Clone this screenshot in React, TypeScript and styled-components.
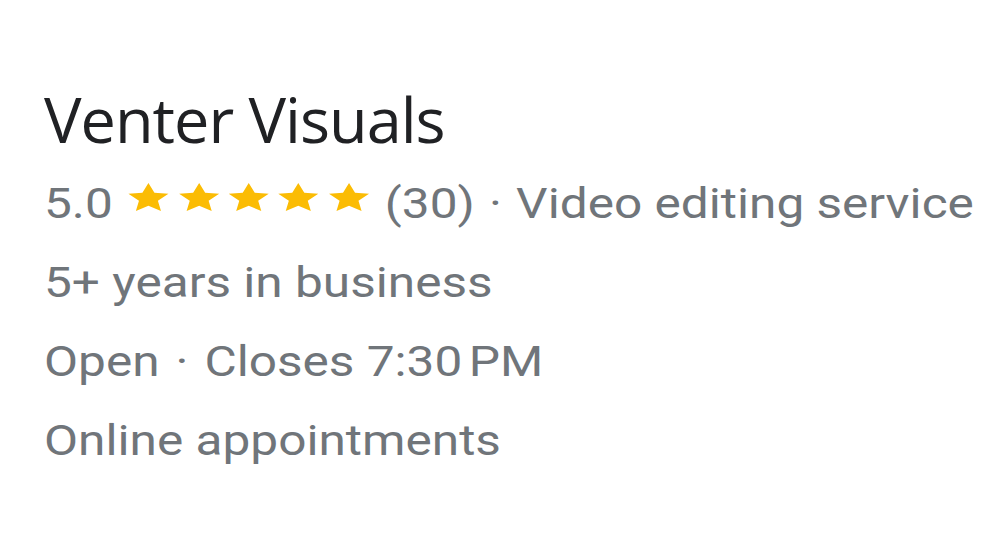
import styled, { createGlobalStyle } from 'styled-components';

const GlobalStyle = createGlobalStyle`
  html, body {
    margin: 0;
    padding: 0;
    background: #ffffff;
  }
`;

const Card = styled.div`
  width: 1000px;
  height: 557px;
  box-sizing: border-box;
  padding: 83px 0 0 44px;
  display: flex;
  flex-direction: column;
  overflow: hidden;
  font-family: Roboto, "Liberation Sans", sans-serif;
  color: #70757a;
  background: #ffffff;
`;

const Title = styled.h1`
  margin: 0 0 9px 0;
  font-family: "Open Sans", Roboto, sans-serif;
  font-weight: 400;
  font-size: 63px;
  line-height: 72px;
  color: #202124;
  letter-spacing: -1px;
`;

// the screenshot is stretched a bit wider than the real text
const Details = styled.div`
  width: 780px;
  display: flex;
  flex-direction: column;
  transform: scaleX(1.18);
  transform-origin: left top;
`;

const Line = styled.div`
  display: flex;
  align-items: center;
  font-size: 42px;
  line-height: 79px;
  white-space: pre;
`;

const Stars = styled.span`
  display: inline-flex;
  gap: 5.4px;
  margin: 0 12px 12px 12px;
`;

const Dot = styled.span<{ $wide?: boolean }>`
  margin: 0 ${p => (p.$wide ? '13.5px' : '12px')};
`;

const Time = styled.span`
  word-spacing: -5px;
`;

function Star() {
  return (
    <svg width="37" height="31" viewBox="0 0 24 23" preserveAspectRatio="none">
      <path
        d="M12 0.8l3.3 7.1 7.7.8-5.8 5.2 1.7 7.6L12 17.6l-6.9 3.9 1.7-7.6L1 8.7l7.7-.8z"
        fill="#fbbc04"
      />
    </svg>
  );
}

export default function App() {
  return (
    <>
      <GlobalStyle />
      <Card>
        <Title>Venter Visuals</Title>
        <Details>
          <Line>
            5.0
            <Stars>
              {[0, 1, 2, 3, 4].map(i => <Star key={i} />)}
            </Stars>
            (30)<Dot>·</Dot>Video editing service
          </Line>
          <Line>5+ years in business</Line>
          <Line>
            Open<Dot $wide>·</Dot>
            {'Closes '}
            <Time>7:30 PM</Time>
          </Line>
          <Line>Online appointments</Line>
        </Details>
      </Card>
    </>
  );
}
